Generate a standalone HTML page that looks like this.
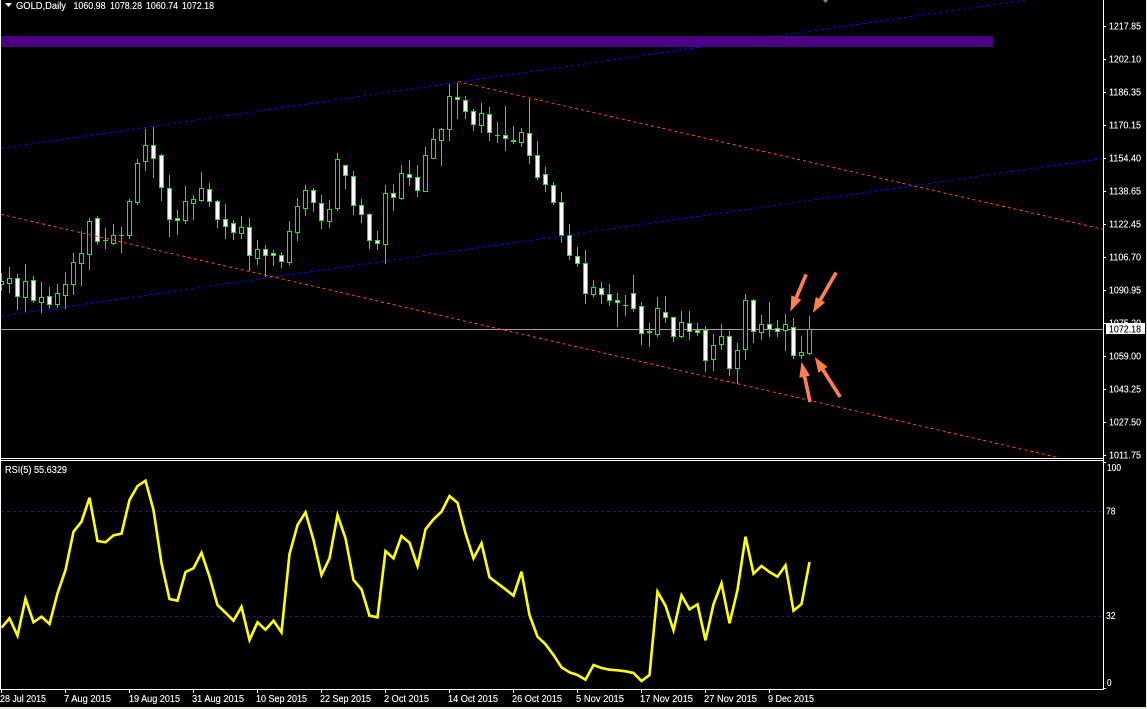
<!DOCTYPE html>
<html>
<head>
<meta charset="utf-8">
<title>GOLD,Daily</title>
<style>
html,body{margin:0;padding:0;background:#ece9d8;width:1147px;height:709px;overflow:hidden}
svg{display:block}
text{font-family:"Liberation Sans",sans-serif;font-size:10px;fill:#fff;stroke:#fff;stroke-width:.12px}
</style>
</head>
<body>
<svg width="1147" height="709" viewBox="0 0 1147 709" xmlns="http://www.w3.org/2000/svg">
<rect x="0" y="0" width="1146" height="707" fill="#000"/>

<g shape-rendering="crispEdges">
<path d="M1 329.5H1103" stroke="#a0a0a0" stroke-width="1" fill="none"/>
<path d="M1 511.5H1103M1 616.5H1103" stroke="#4b0082" stroke-width="1" stroke-dasharray="3 3" fill="none"/>

<!-- wicks -->
<path fill="none" stroke="#00ff00" stroke-width="1" d="M1.5 273V291M9.5 267V293M17.5 274V310M25.5 264V313M33.5 276V303M41.5 282V313M49.5 287V309M57.5 284V308M65.5 272V309M73.5 253V295M81.5 231V286M89.5 218V270M97.5 216V245M105.5 228V249M113.5 224V245M121.5 227V253M129.5 199V239M137.5 159V205M145.5 129V171M153.5 127V178M161.5 154V201M169.5 175V237M177.5 210V235M185.5 186V224M193.5 195V220M201.5 172V202M209.5 183V207M217.5 200V228M225.5 204V239M233.5 220V240M241.5 216V239M249.5 218V271M257.5 240V265M265.5 245V277M273.5 250V266M281.5 252V268M289.5 221V265M297.5 198V241M305.5 185V216M313.5 188V212M321.5 195V229M329.5 200V228M337.5 153V211M345.5 165V189M353.5 171V215M361.5 199V223M369.5 213V249M377.5 231V250M385.5 185V264M393.5 184V211M401.5 165V200M409.5 160V186M417.5 165V197M425.5 147V192M433.5 128V159M441.5 128V166M449.5 84V141M457.5 83V119M465.5 96V119M473.5 109V131M481.5 103V133M489.5 107V141M497.5 122V143M505.5 106V151M513.5 126V144M521.5 128V147M529.5 99V164M537.5 141V180M545.5 167V192M553.5 182V205M561.5 192V243M569.5 224V260M577.5 247V267M585.5 250V304M593.5 280V297M601.5 282V304M609.5 284V306M617.5 293V327M625.5 295V316M633.5 275V312M641.5 302V345M649.5 323V347M657.5 297V337M665.5 296V323M673.5 317V342M681.5 311V338M689.5 311V340M697.5 323V336M705.5 326V372M713.5 334V371M721.5 324V350M729.5 331V376M737.5 343V384M745.5 294V360M753.5 299V343M761.5 315V340M769.5 302V337M777.5 320V337M785.5 314V351M793.5 318V359M801.5 336V359M809.5 316V355"/>

<!-- bullish (hollow) bodies -->
<path fill="#000" stroke="#00ff00" stroke-width="1" d="M-.5 281.5h4V284.5h-4zM7.5 278.5h4V283.5h-4zM23.5 281.5h4V297.5h-4zM39.5 297.5h4V302.5h-4zM55.5 293.5h4V304.5h-4zM63.5 284.5h4V295.5h-4zM71.5 262.5h4V284.5h-4zM79.5 253.5h4V263.5h-4zM87.5 221.5h4V254.5h-4zM111.5 235.5h4V243.5h-4zM127.5 201.5h4V235.5h-4zM135.5 163.5h4V202.5h-4zM143.5 145.5h4V161.5h-4zM183.5 201.5h4V220.5h-4zM191.5 199.5h4V203.5h-4zM199.5 188.5h4V200.5h-4zM239.5 227.5h4V233.5h-4zM255.5 249.5h4V258.5h-4zM287.5 231.5h4V262.5h-4zM295.5 206.5h4V232.5h-4zM303.5 190.5h4V208.5h-4zM327.5 209.5h4V221.5h-4zM335.5 159.5h4V208.5h-4zM383.5 193.5h4V244.5h-4zM399.5 173.5h4V198.5h-4zM423.5 155.5h4V191.5h-4zM431.5 139.5h4V158.5h-4zM439.5 129.5h4V140.5h-4zM447.5 96.5h4V129.5h-4zM479.5 113.5h4V125.5h-4zM519.5 132.5h4V142.5h-4zM591.5 287.5h4V294.5h-4zM655.5 308.5h4V334.5h-4zM679.5 322.5h4V336.5h-4zM711.5 345.5h4V359.5h-4zM719.5 336.5h4V344.5h-4zM735.5 350.5h4V368.5h-4zM743.5 300.5h4V349.5h-4zM759.5 324.5h4V332.5h-4zM783.5 324.5h4V330.5h-4zM799.5 352.5h4V355.5h-4zM807.5 329.5h4V353.5h-4z"/>

<!-- bearish (white) bodies -->
<path fill="#fff" stroke="#00ff00" stroke-width="1" d="M15.5 278.5h4V296.5h-4zM31.5 280.5h4V300.5h-4zM47.5 296.5h4V304.5h-4zM95.5 218.5h4V241.5h-4zM151.5 145.5h4V158.5h-4zM159.5 155.5h4V187.5h-4zM167.5 188.5h4V219.5h-4zM175.5 218.5h4V220.5h-4zM207.5 189.5h4V201.5h-4zM215.5 201.5h4V219.5h-4zM223.5 219.5h4V226.5h-4zM231.5 223.5h4V232.5h-4zM247.5 227.5h4V255.5h-4zM263.5 249.5h4V255.5h-4zM271.5 253.5h4V255.5h-4zM279.5 255.5h4V261.5h-4zM311.5 190.5h4V202.5h-4zM319.5 203.5h4V220.5h-4zM343.5 165.5h4V175.5h-4zM351.5 176.5h4V205.5h-4zM359.5 205.5h4V214.5h-4zM367.5 214.5h4V240.5h-4zM375.5 240.5h4V243.5h-4zM391.5 193.5h4V197.5h-4zM407.5 174.5h4V177.5h-4zM415.5 177.5h4V190.5h-4zM455.5 97.5h4V99.5h-4zM463.5 100.5h4V111.5h-4zM471.5 111.5h4V124.5h-4zM487.5 114.5h4V132.5h-4zM503.5 135.5h4V138.5h-4zM527.5 133.5h4V155.5h-4zM535.5 155.5h4V177.5h-4zM543.5 174.5h4V184.5h-4zM551.5 185.5h4V202.5h-4zM559.5 202.5h4V235.5h-4zM567.5 235.5h4V255.5h-4zM575.5 256.5h4V263.5h-4zM583.5 263.5h4V293.5h-4zM599.5 288.5h4V294.5h-4zM607.5 294.5h4V300.5h-4zM615.5 300.5h4V302.5h-4zM631.5 293.5h4V308.5h-4zM639.5 306.5h4V333.5h-4zM663.5 312.5h4V317.5h-4zM671.5 317.5h4V336.5h-4zM687.5 323.5h4V331.5h-4zM695.5 330.5h4V332.5h-4zM703.5 330.5h4V360.5h-4zM727.5 336.5h4V368.5h-4zM751.5 300.5h4V331.5h-4zM767.5 324.5h4V329.5h-4zM775.5 328.5h4V331.5h-4zM791.5 327.5h4V355.5h-4z"/>

<!-- doji -->
<path fill="none" stroke="#00ff00" stroke-width="1" d="M103 240.5h5M119 235.5h5M495 135.5h5M623 305.5h5M511 140.5h5M511 141.5h5M647 331.5h5M647 332.5h5"/>

<!-- trend lines -->
<g fill="none" stroke-width="1" stroke-dasharray="3 3">
<path d="M1 148.3L1026 0" stroke="#0000ff"/>
<path d="M1 316L1103 158.5" stroke="#0000ff"/>
<path d="M458 81.5L1103 229.2" stroke="#ff4500"/>
<path d="M1 214.3L1058 457.5" stroke="#ff4500"/>
</g>
<rect x="1" y="36" width="992" height="11" fill="#4b0082"/>
</g>

<!-- arrows -->
<g fill="#ff7f50" stroke="#ff7f50" stroke-width=".6">
<polygon points="807.4,275.3 797.6,298.4 800.8,299.8 790.7,310.7 791.6,295.8 794.8,297.2 804.6,274.1"/>
<polygon points="837.3,273.5 821.6,300.7 824.6,302.4 813.3,312 816,297.4 819,299.2 834.7,272"/>
<polygon points="811.5,401.4 806.1,376.1 809.5,375.4 801.7,362.7 799.7,377.4 803.1,376.7 808.5,402"/>
<polygon points="841.3,395.9 824.1,368.7 827,366.8 815.3,357.7 818.6,372.2 821.5,370.3 838.7,397.5"/>
</g>
<polygon points="823,0 828,0 825.5,3" fill="#778899"/>

<!-- RSI -->
<polyline fill="none" stroke="#ffff00" stroke-width="2.6" stroke-linejoin="miter" points="1.5,627.7 9.5,618.3 17.5,635.7 25.5,598.7 33.5,622.3 41.5,616.7 49.5,624 57.5,593.3 65.5,570 73.5,531.7 81.5,521.7 89.5,497.7 97.5,541 105.5,542.3 113.5,535.3 121.5,533.7 129.5,500 137.5,486 145.5,480.7 153.5,510 161.5,563.3 169.5,599 177.5,600.7 185.5,572 193.5,568.3 201.5,552.7 209.5,576.7 217.5,605 225.5,612.7 233.5,620.7 241.5,606.7 249.5,640 257.5,622.3 265.5,629.7 273.5,620.7 281.5,632.3 289.5,554 297.5,525 305.5,512.3 313.5,540 321.5,575 329.5,558.3 337.5,515 345.5,538.3 353.5,580 361.5,589.3 369.5,615.7 377.5,617.3 385.5,551 393.5,558.3 401.5,536 409.5,542.7 417.5,566 425.5,529.3 433.5,519.3 441.5,511.7 449.5,496 457.5,502.7 465.5,533.3 473.5,558.3 481.5,543.3 489.5,577.3 497.5,583.3 505.5,589.3 513.5,595.7 521.5,571.7 529.5,615 537.5,636.7 545.5,644.3 553.5,655 561.5,667.3 569.5,672.3 577.5,675 585.5,679.7 593.5,665 601.5,668 609.5,669.7 617.5,670.3 625.5,671.3 633.5,673 641.5,681 649.5,675 657.5,591.7 665.5,605.7 673.5,630.3 681.5,595.3 689.5,609.3 697.5,604.3 705.5,640.3 713.5,604.3 721.5,583.3 729.5,623.3 737.5,590 745.5,536.7 753.5,573.7 761.5,566 769.5,572 777.5,576.7 785.5,565.3 793.5,610.7 801.5,604 809.5,562"/>

<!-- frame -->
<g shape-rendering="crispEdges" fill="none" stroke="#fff" stroke-width="1">
<path d="M.5 0V690M1103.5 0V690M0 458.5H1104M0 460.5H1104M0 689.5H1104"/>
<path d="M1104 26.5h2M1104 59.5h2M1104 92.5h2M1104 125.5h2M1104 158.5h2M1104 191.5h2M1104 224.5h2M1104 257.5h2M1104 290.5h2M1104 323.5h2M1104 356.5h2M1104 389.5h2M1104 422.5h2M1104 455.5h2M1104 462.5h2M1104 688.5h2"/>
<path d="M1.5 690v3M65.5 690v3M129.5 690v3M193.5 690v3M257.5 690v3M321.5 690v3M385.5 690v3M449.5 690v3M513.5 690v3M577.5 690v3M641.5 690v3M705.5 690v3M769.5 690v3"/>
</g>

<!-- header -->
<polygon points="5,3 12,3 8.5,7" fill="#fff"/>
<text x="16" y="9" textLength="50" lengthAdjust="spacingAndGlyphs">GOLD,Daily</text>
<text x="73.5" y="9" textLength="32" lengthAdjust="spacingAndGlyphs">1060.98</text>
<text x="110" y="9" textLength="32" lengthAdjust="spacingAndGlyphs">1078.28</text>
<text x="146" y="9" textLength="32" lengthAdjust="spacingAndGlyphs">1060.74</text>
<text x="182" y="9" textLength="32" lengthAdjust="spacingAndGlyphs">1072.18</text>
<text x="5" y="473" textLength="62" lengthAdjust="spacingAndGlyphs">RSI(5) 55.6329</text>

<!-- price axis -->
<g>
<text x="1109" y="29.5" textLength="32" lengthAdjust="spacingAndGlyphs">1217.85</text>
<text x="1109" y="62.5" textLength="32" lengthAdjust="spacingAndGlyphs">1202.10</text>
<text x="1109" y="95.5" textLength="32" lengthAdjust="spacingAndGlyphs">1186.35</text>
<text x="1109" y="128.5" textLength="32" lengthAdjust="spacingAndGlyphs">1170.15</text>
<text x="1109" y="161.5" textLength="32" lengthAdjust="spacingAndGlyphs">1154.40</text>
<text x="1109" y="194.5" textLength="32" lengthAdjust="spacingAndGlyphs">1138.65</text>
<text x="1109" y="227.5" textLength="32" lengthAdjust="spacingAndGlyphs">1122.45</text>
<text x="1109" y="260.5" textLength="32" lengthAdjust="spacingAndGlyphs">1106.70</text>
<text x="1109" y="293.5" textLength="32" lengthAdjust="spacingAndGlyphs">1090.95</text>
<text x="1109" y="326.5" textLength="32" lengthAdjust="spacingAndGlyphs">1075.20</text>
<text x="1109" y="359.5" textLength="32" lengthAdjust="spacingAndGlyphs">1059.00</text>
<text x="1109" y="392.5" textLength="32" lengthAdjust="spacingAndGlyphs">1043.25</text>
<text x="1109" y="425.5" textLength="32" lengthAdjust="spacingAndGlyphs">1027.50</text>
<text x="1109" y="458.5" textLength="32" lengthAdjust="spacingAndGlyphs">1011.75</text>
</g>
<rect x="1106" y="323" width="39" height="11" fill="#fff" shape-rendering="crispEdges"/>
<text x="1109" y="332.5" textLength="32" lengthAdjust="spacingAndGlyphs" style="fill:#000;stroke:#000">1072.18</text>

<!-- RSI axis -->
<text x="1107" y="471" textLength="14" lengthAdjust="spacingAndGlyphs">100</text>
<text x="1106" y="514.5" textLength="9.5" lengthAdjust="spacingAndGlyphs">78</text>
<text x="1106" y="619" textLength="9.5" lengthAdjust="spacingAndGlyphs">32</text>
<text x="1107" y="686" textLength="4.5" lengthAdjust="spacingAndGlyphs">0</text>

<!-- dates -->
<text x="0" y="702" textLength="46" lengthAdjust="spacingAndGlyphs">28 Jul 2015</text>
<text x="64" y="702" textLength="47" lengthAdjust="spacingAndGlyphs">7 Aug 2015</text>
<text x="129" y="702" textLength="51" lengthAdjust="spacingAndGlyphs">19 Aug 2015</text>
<text x="192" y="702" textLength="52" lengthAdjust="spacingAndGlyphs">31 Aug 2015</text>
<text x="256" y="702" textLength="51" lengthAdjust="spacingAndGlyphs">10 Sep 2015</text>
<text x="320" y="702" textLength="51" lengthAdjust="spacingAndGlyphs">22 Sep 2015</text>
<text x="384" y="702" textLength="45" lengthAdjust="spacingAndGlyphs">2 Oct 2015</text>
<text x="448" y="702" textLength="50" lengthAdjust="spacingAndGlyphs">14 Oct 2015</text>
<text x="512" y="702" textLength="50" lengthAdjust="spacingAndGlyphs">26 Oct 2015</text>
<text x="576" y="702" textLength="48" lengthAdjust="spacingAndGlyphs">5 Nov 2015</text>
<text x="640" y="702" textLength="53" lengthAdjust="spacingAndGlyphs">17 Nov 2015</text>
<text x="704" y="702" textLength="53" lengthAdjust="spacingAndGlyphs">27 Nov 2015</text>
<text x="768" y="702" textLength="46" lengthAdjust="spacingAndGlyphs">9 Dec 2015</text>
</svg>
</body>
</html>
